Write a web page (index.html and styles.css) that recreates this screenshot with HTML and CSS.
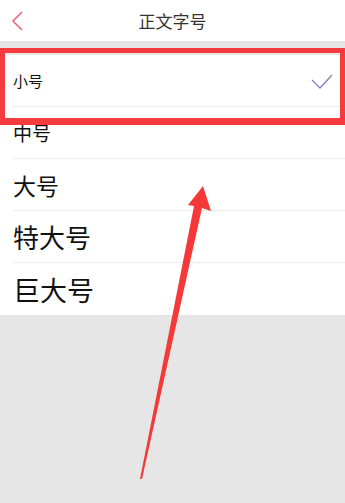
FILE: index.html
```html
<!DOCTYPE html>
<html lang="zh-CN">
<head>
    <meta charset="UTF-8">
    <meta name="viewport" content="width=device-width, initial-scale=1.0">
    <title>正文字号</title>
    <link rel="stylesheet" href="styles.css">
</head>
<body>

    <nav class="nav">
        <svg class="nav__back" width="20" height="24" viewBox="0 0 20 24">
            <polyline points="14,3 5,12 14,21" fill="none" stroke="#e8677a" stroke-width="1.6"/>
        </svg>
        <div class="nav__title">正文字号</div>
    </nav>

    <div class="spacer"></div>

    <ul class="size-list">
        <li class="size size--s">
            <span>小号</span>
            <svg class="size__check" width="22" height="16" viewBox="0 0 22 16">
                <polyline points="1,6 9,14 21,1" fill="none" stroke="#7f82c4" stroke-width="1.3"/>
            </svg>
        </li>
        <li class="size size--m"><span>中号</span></li>
        <li class="size size--l"><span>大号</span></li>
        <li class="size size--xl"><span>特大号</span></li>
        <li class="size size--xxl"><span>巨大号</span></li>
    </ul>

    <!-- annotation: red box + arrow -->
    <div class="mark-box"></div>
    <svg class="mark-arrow" width="345" height="503" viewBox="0 0 345 503">
        <polygon points="203,186 211,211 202,208 142,479 140,479 194,206 188,205" fill="#f53838"/>
    </svg>

</body>
</html>
```

FILE: styles.css
```css
body {
    font-family: "Noto Sans CJK SC", "Noto Sans", sans-serif;
    background: #e6e6e6;
    color: #111;
    margin: 0;
    min-height: 100vh;
    position: relative;
}

.nav {
    height: 41px;
    background: #fff;
    display: flex;
    align-items: center;
    justify-content: center;
    position: relative;
}

.nav__back {
    position: absolute;
    left: 8px;
    top: 9px;
}

.nav__title {
    font-size: 17px;
    color: #333;
}

.spacer {
    height: 14px;
}

.size-list {
    list-style: none;
    margin: 0;
    padding: 0 0 0 13px;
    background: #fff;
}

.size {
    height: 52px;
    display: flex;
    align-items: center;
    justify-content: space-between;
    padding-right: 12px;
    border-bottom: 1px solid #ececec;
    box-sizing: border-box;
}

.size:last-child {
    border-bottom: none;
}

.size--s { font-size: 15px; }
.size--m { font-size: 19px; }
.size--l { font-size: 23px; }
.size--xl { font-size: 26px; }
.size--xxl { font-size: 27px; }

.size__check {
    margin-top: 2px;
}

.mark-box {
    position: absolute;
    top: 48px;
    left: 0;
    width: 345px;
    height: 77px;
    box-sizing: border-box;
    border: 5px solid #f63b3f;
    border-bottom-width: 7px;
}

.mark-arrow {
    position: absolute;
    top: 0;
    left: 0;
}
```
